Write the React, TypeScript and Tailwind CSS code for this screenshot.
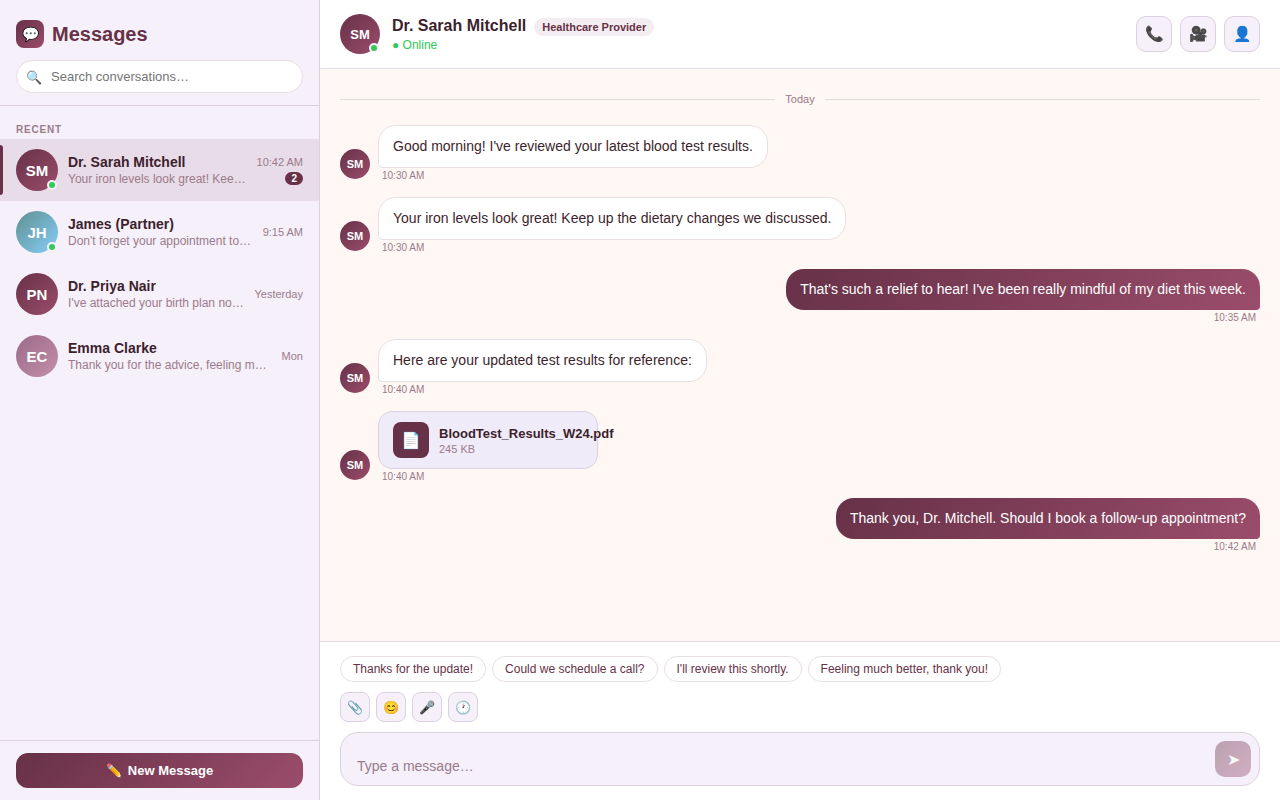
import { useState } from "react";
import clsx from "clsx";

type Conversation = {
  initials: string;
  name: string;
  preview: string;
  time: string;
  tone: string;
  online?: boolean;
  unread?: number;
};

type Message = {
  id: number;
  mine?: boolean;
  text?: string;
  file?: { name: string; size: string };
  time: string;
};

const WINE = "bg-linear-135 from-[#673147] to-[#9b4d6b]";

const conversations: Conversation[] = [
  { initials: "SM", name: "Dr. Sarah Mitchell", preview: "Your iron levels look great! Keep up the dietary changes.", time: "10:42 AM", tone: WINE, online: true, unread: 2 },
  { initials: "JH", name: "James (Partner)", preview: "Don't forget your appointment tomorrow!", time: "9:15 AM", tone: "bg-linear-135 from-[#5f9090] to-[#87cefa]", online: true },
  { initials: "PN", name: "Dr. Priya Nair", preview: "I've attached your birth plan notes for review.", time: "Yesterday", tone: WINE },
  { initials: "EC", name: "Emma Clarke", preview: "Thank you for the advice, feeling much better!", time: "Mon", tone: "bg-linear-135 from-[#9b6b8a] to-[#c48fa8]" },
];

const messages: Message[] = [
  { id: 1, text: "Good morning! I've reviewed your latest blood test results.", time: "10:30 AM" },
  { id: 2, text: "Your iron levels look great! Keep up the dietary changes we discussed.", time: "10:30 AM" },
  { id: 3, mine: true, text: "That's such a relief to hear! I've been really mindful of my diet this week.", time: "10:35 AM" },
  { id: 4, text: "Here are your updated test results for reference:", time: "10:40 AM" },
  { id: 5, file: { name: "BloodTest_Results_W24.pdf", size: "245 KB" }, time: "10:40 AM" },
  { id: 6, mine: true, text: "Thank you, Dr. Mitchell. Should I book a follow-up appointment?", time: "10:42 AM" },
];

const quickReplies = ["Thanks for the update!", "Could we schedule a call?", "I'll review this shortly.", "Feeling much better, thank you!"];

const headerActions = [
  { icon: "📞", label: "Voice call" },
  { icon: "🎥", label: "Video call" },
  { icon: "👤", label: "View profile" },
];

const tools = [
  { icon: "📎", label: "Attach file" },
  { icon: "😊", label: "Insert emoji" },
  { icon: "🎤", label: "Record voice message" },
  { icon: "🕐", label: "Schedule message" },
];

function Avatar({ initials, tone, size, online }: { initials: string; tone: string; size: string; online?: boolean }) {
  return (
    <span className={clsx("relative flex shrink-0 items-center justify-center rounded-full font-bold text-white", tone, size)}>
      {initials}
      {online && <span className="absolute right-px bottom-px size-2.5 rounded-full border-2 border-[#f5f0fa] bg-[#34c759]" />}
    </span>
  );
}

function ConversationRow({ item, active, onSelect }: { item: Conversation; active: boolean; onSelect: () => void }) {
  return (
    <li>
      <button
        type="button"
        onClick={onSelect}
        className={clsx("relative flex w-full items-center gap-2.5 px-4 py-2.5 text-left", active && "bg-[#e8dce8]")}
      >
        {active && <span className="absolute inset-y-1.5 left-0 w-[3px] rounded-r-[3px] bg-[#673147]" />}
        <Avatar initials={item.initials} tone={item.tone} size="size-[42px] text-[15px] leading-[17px]" online={item.online} />
        <span className="flex min-w-0 flex-1 flex-col gap-0.5">
          <span className="truncate text-sm leading-4 font-bold text-[#3d1f2d]">{item.name}</span>
          <span className="truncate text-xs leading-[14px] text-[#9b7b8a]">{item.preview}</span>
        </span>
        <span className="flex shrink-0 flex-col items-end gap-1">
          <span className="text-[11px] leading-3 text-[#9b7b8a]">{item.time}</span>
          {item.unread && (
            <span className="rounded-full bg-[#673147] px-1.5 py-px text-[10px] leading-[11px] font-bold text-white">{item.unread}</span>
          )}
        </span>
      </button>
    </li>
  );
}

function MessageRow({ message }: { message: Message }) {
  const { mine, text, file, time } = message;
  return (
    <li className={clsx("flex items-end gap-2", mine && "justify-end")}>
      {!mine && (
        <span className="pb-0.5">
          <Avatar initials="SM" tone={WINE} size="size-[30px] text-[11px]" />
        </span>
      )}
      <div className={clsx("flex max-w-[70%] flex-col gap-0.5", mine ? "items-end" : "items-start")}>
        {file ? (
          <a href="#file" className="flex w-[220px] items-center gap-2.5 rounded-[14px] border border-[#ddd0e0] bg-[#f0ebf8] px-3.5 py-2.5">
            <span className="flex size-9 shrink-0 items-center justify-center rounded-lg bg-[#673147] text-base leading-[normal]">📄</span>
            <span className="flex flex-col gap-0.5">
              <span className="text-[13px] leading-[15px] font-bold whitespace-nowrap text-[#3d1f2d]">{file.name}</span>
              <span className="text-[11px] leading-3 text-[#9b7b8a]">{file.size}</span>
            </span>
          </a>
        ) : (
          <p
            className={clsx(
              "rounded-[18px] px-3.5 py-2.5 text-sm leading-[21px]",
              mine ? "rounded-br-sm text-white" : "rounded-bl-sm border border-[#e8dfe4] bg-white text-[#3d1f2d]",
              mine && WINE,
            )}
          >
            {text}
          </p>
        )}
        <time className="px-1 text-[10px] leading-[11px] text-[#9b7b8a]">{time}</time>
      </div>
    </li>
  );
}

export default function App() {
  const [selected, setSelected] = useState(0);
  const [draft, setDraft] = useState("");

  return (
    <div className="flex h-screen bg-[#fff7f4] font-['Liberation_Sans',Arial,sans-serif] text-[#3d1f2d]">
      <aside className="flex w-80 shrink-0 flex-col border-r border-[#ddd0e0] bg-[#f5f0fa]">
        <header className="flex flex-col gap-3 border-b border-[#ddd0e0] px-4 pt-5 pb-3">
          <div className="flex items-center gap-2">
            <span className={clsx("flex size-7 items-center justify-center rounded-lg text-sm", WINE)}>💬</span>
            <h1 className="text-xl leading-7 font-bold text-[#673147]">Messages</h1>
          </div>
          <div className="flex h-[33px] items-center gap-[9px] rounded-full border border-[#e8dce4] bg-white px-[9px]">
            <label htmlFor="conversation-search" className="w-4 pt-0.5 text-[13px] leading-[15px]">
              🔍
            </label>
            <input
              id="conversation-search"
              type="text"
              aria-label="Search conversations"
              placeholder="Search conversations…"
              className="h-[15px] min-w-0 flex-1 bg-transparent text-[13px] leading-[15px] outline-none placeholder:text-[#757575]"
            />
          </div>
        </header>

        <div className="flex-1 overflow-y-auto">
          <h2 className="px-4 pt-[18px] pb-1 text-[10px] leading-[11px] font-bold tracking-[0.08em] text-[#9b7b8a] uppercase">Recent</h2>
          <ul>
            {conversations.map((item, i) => (
              <ConversationRow key={item.name} item={item} active={i === selected} onSelect={() => setSelected(i)} />
            ))}
          </ul>
        </div>

        <footer className="border-t border-[#ddd0e0] px-4 py-3">
          <button
            type="button"
            className={clsx("flex w-full items-center justify-center gap-1.5 rounded-xl py-2.5 text-[13px] leading-[15px] font-bold text-white", WINE)}
          >
            <span>✏️</span>
            <span>New Message</span>
          </button>
        </footer>
      </aside>

      <main className="flex min-w-0 flex-1 flex-col">
        <header className="flex items-center gap-3 border-b border-[#e8dce4] bg-white px-5 py-3.5">
          <Avatar initials="SM" tone={WINE} size="size-10 text-[13px] leading-[normal]" online />
          <div className="flex flex-1 flex-col gap-0.5">
            <div className="flex items-end gap-2">
              <h2 className="text-base leading-5 font-bold">Dr. Sarah Mitchell</h2>
              <span className="rounded-full bg-[#f3edf1] px-2 py-[3px] text-[11px] leading-3 font-bold text-[#673147]">Healthcare Provider</span>
            </div>
            <p className="text-xs leading-[14px] text-[#34c759]">● Online</p>
          </div>
          <div className="flex gap-2">
            {headerActions.map((a) => (
              <button
                key={a.label}
                type="button"
                aria-label={a.label}
                className="flex size-9 items-center justify-center rounded-[10px] border border-[#ddd0e0] bg-[#f5f0fa] text-[15px] leading-[normal]"
              >
                {a.icon}
              </button>
            ))}
          </div>
        </header>

        <section className="flex flex-1 flex-col gap-4 overflow-y-auto p-5">
          <div className="flex items-center gap-2.5 py-1">
            <span className="h-px flex-1 bg-[#e5d8dc]" />
            <span className="text-[11px] leading-3 text-[#9b7b8a]">Today</span>
            <span className="h-px flex-1 bg-[#e5d8dc]" />
          </div>
          <ul className="flex flex-col gap-4">
            {messages.map((m) => (
              <MessageRow key={m.id} message={m} />
            ))}
          </ul>
        </section>

        <footer className="flex flex-col gap-2.5 border-t border-[#e8dce4] bg-white px-5 py-3.5">
          <div className="flex flex-wrap gap-1.5">
            {quickReplies.map((reply) => (
              <button
                key={reply}
                type="button"
                onClick={() => setDraft(reply)}
                className="rounded-full border border-[#e8dfe4] bg-white px-3 py-[5px] text-xs leading-[14px] text-[#673147]"
              >
                {reply}
              </button>
            ))}
          </div>
          <div className="flex gap-1.5">
            {tools.map((t) => (
              <button
                key={t.label}
                type="button"
                aria-label={t.label}
                className="flex size-[30px] items-center justify-center rounded-lg border border-[#ddd0e0] bg-[#f5f0fa] text-[13px] leading-[normal]"
              >
                {t.icon}
              </button>
            ))}
          </div>
          <form
            onSubmit={(e) => {
              e.preventDefault();
              setDraft("");
            }}
            className="flex items-end gap-2 rounded-[18px] border border-[#ddd0e0] bg-[#f5f0fa] py-2 pr-2 pl-4"
          >
            <textarea
              rows={1}
              aria-label="Message"
              value={draft}
              onChange={(e) => setDraft(e.target.value)}
              placeholder="Type a message…"
              className="min-w-0 flex-1 resize-none bg-transparent text-sm leading-[21px] outline-none placeholder:text-[#9b7b8a]"
            />
            <button
              type="submit"
              aria-label="Send"
              disabled={!draft}
              className={clsx("flex size-9 items-center justify-center rounded-[10px] text-base leading-[normal] text-white disabled:opacity-40", WINE)}
            >
              ➤
            </button>
          </form>
        </footer>
      </main>
    </div>
  );
}
